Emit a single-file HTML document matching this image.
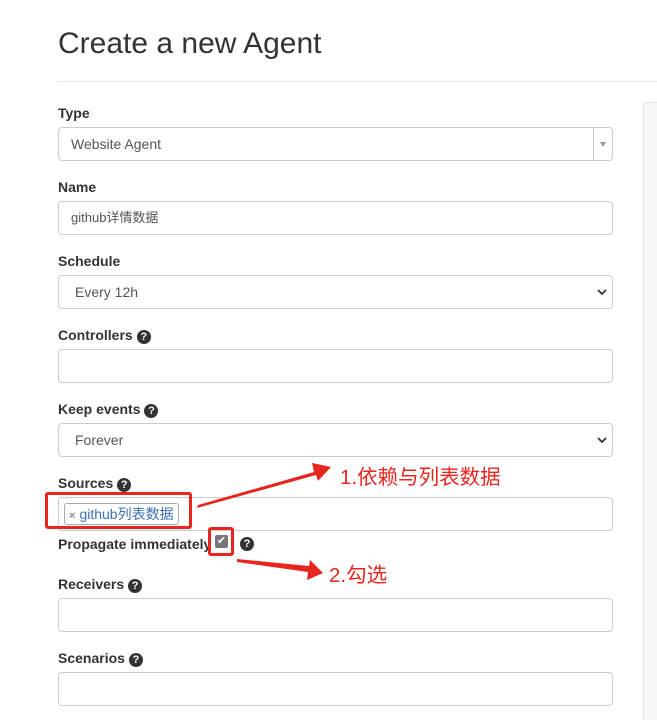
<!DOCTYPE html>
<html style="overflow:hidden;height:720px"><head><meta charset="utf-8"><style>
body{margin:0;width:657px;height:720px;overflow:hidden;background:#fff;font-family:"Liberation Sans","Noto Sans CJK SC",sans-serif;color:#333;position:relative}
.a{position:absolute}
h1{position:absolute;left:58px;top:26px;margin:0;font-size:30px;font-weight:400;color:#333;line-height:36px}
.hr{left:58px;top:81px;width:599px;height:1px;background:#e6e6e6}
.lbl{position:absolute;left:58px;font-size:14px;font-weight:bold;color:#333;line-height:16px}
.q{display:inline-block;width:14px;height:14px;border-radius:50%;background:#333;color:#fff;font-size:11px;font-weight:bold;line-height:14px;text-align:center;vertical-align:0px;margin-left:4px}
.inp{position:absolute;left:58px;width:553px;height:32px;border:1px solid #ccc;border-radius:4px;font-size:14px;line-height:32px;box-sizing:content-box}
.inp span.t{margin-left:12px}
.sel{background:#fff}
.chev{position:absolute;right:5px;top:12px}
</style></head><body>
<h1>Create a new Agent</h1>
<div class="a hr"></div>
<div class="a" style="left:643px;top:102px;width:20px;height:630px;border:1px solid #e3e3e3;border-radius:4px;background:#f7f7f7"></div>

<div class="lbl" style="top:105px">Type</div>
<div class="inp" style="top:127px;color:#555"><span class="t">Website Agent</span>
<div class="a" style="right:18px;top:0;width:1px;height:32px;background:#ccc"></div>
<div class="a" style="right:6px;top:14px;width:0;height:0;border-left:3px solid transparent;border-right:3px solid transparent;border-top:5px solid #999"></div></div>

<div class="lbl" style="top:179px">Name</div>
<div class="inp" style="top:201px;font-size:13px;color:#555"><span class="t">github详情数据</span></div>

<div class="lbl" style="top:253px">Schedule</div>
<div class="inp sel" style="top:275px;color:#555"><span class="t" style="margin-left:16px">Every 12h</span>
<svg class="chev" width="10" height="8" viewBox="0 0 10 8"><path d="M1 2l4 4 4-4" stroke="#333" stroke-width="1.8" fill="none"/></svg></div>

<div class="lbl" style="top:327px">Controllers<span class="q">?</span></div>
<div class="inp" style="top:349px"></div>

<div class="lbl" style="top:401px">Keep events<span class="q">?</span></div>
<div class="inp sel" style="top:423px;color:#555"><span class="t" style="margin-left:16px">Forever</span>
<svg class="chev" width="10" height="8" viewBox="0 0 10 8"><path d="M1 2l4 4 4-4" stroke="#333" stroke-width="1.8" fill="none"/></svg></div>

<div class="lbl" style="top:475px">Sources<span class="q">?</span></div>
<div class="inp" style="top:497px"></div>
<div class="a" style="left:64px;top:503px;height:20px;border:1px solid #aaa;border-radius:3px;padding:0 4px;font-size:14px;line-height:20px;color:#3a6fb5;background:#fff"><span style="color:#888;font-weight:bold;font-size:11px;margin-right:4px">×</span>github列表数据</div>
<div class="a" style="left:45px;top:492px;width:147px;height:37px;border:3px solid #e8261f;border-radius:3px;box-sizing:border-box"></div>

<div class="lbl" style="top:536px">Propagate immediately</div>
<div class="a" style="left:215px;top:535px;width:13px;height:13px;background:#777;border-radius:2px;color:#fff;font-size:11px;line-height:13px;text-align:center">✔</div>
<div class="a" style="left:208px;top:527px;width:26px;height:29px;border:3px solid #e8261f;border-radius:3px;box-sizing:border-box"></div>
<div class="a q" style="left:236px;top:537px">?</div>

<div class="lbl" style="top:576px">Receivers<span class="q">?</span></div>
<div class="inp" style="top:598px"></div>

<div class="lbl" style="top:650px">Scenarios<span class="q">?</span></div>
<div class="inp" style="top:672px"></div>

<svg class="a" style="left:0;top:0" width="657" height="720">
<polygon points="197,508 198,505 314,472 312,463 331,467 318,481 316,475" fill="#e8261f"/>
<polygon points="237,559 309,566 310,560 323,573 307,580 308,572 237,562" fill="#e8261f"/>
</svg>
<div class="a" style="left:340px;top:465px;font-size:20.5px;color:#e8261f;line-height:26px">1.依赖与列表数据</div>
<div class="a" style="left:329px;top:563px;font-size:20.5px;color:#e8261f;line-height:26px">2.勾选</div>
</body></html>
